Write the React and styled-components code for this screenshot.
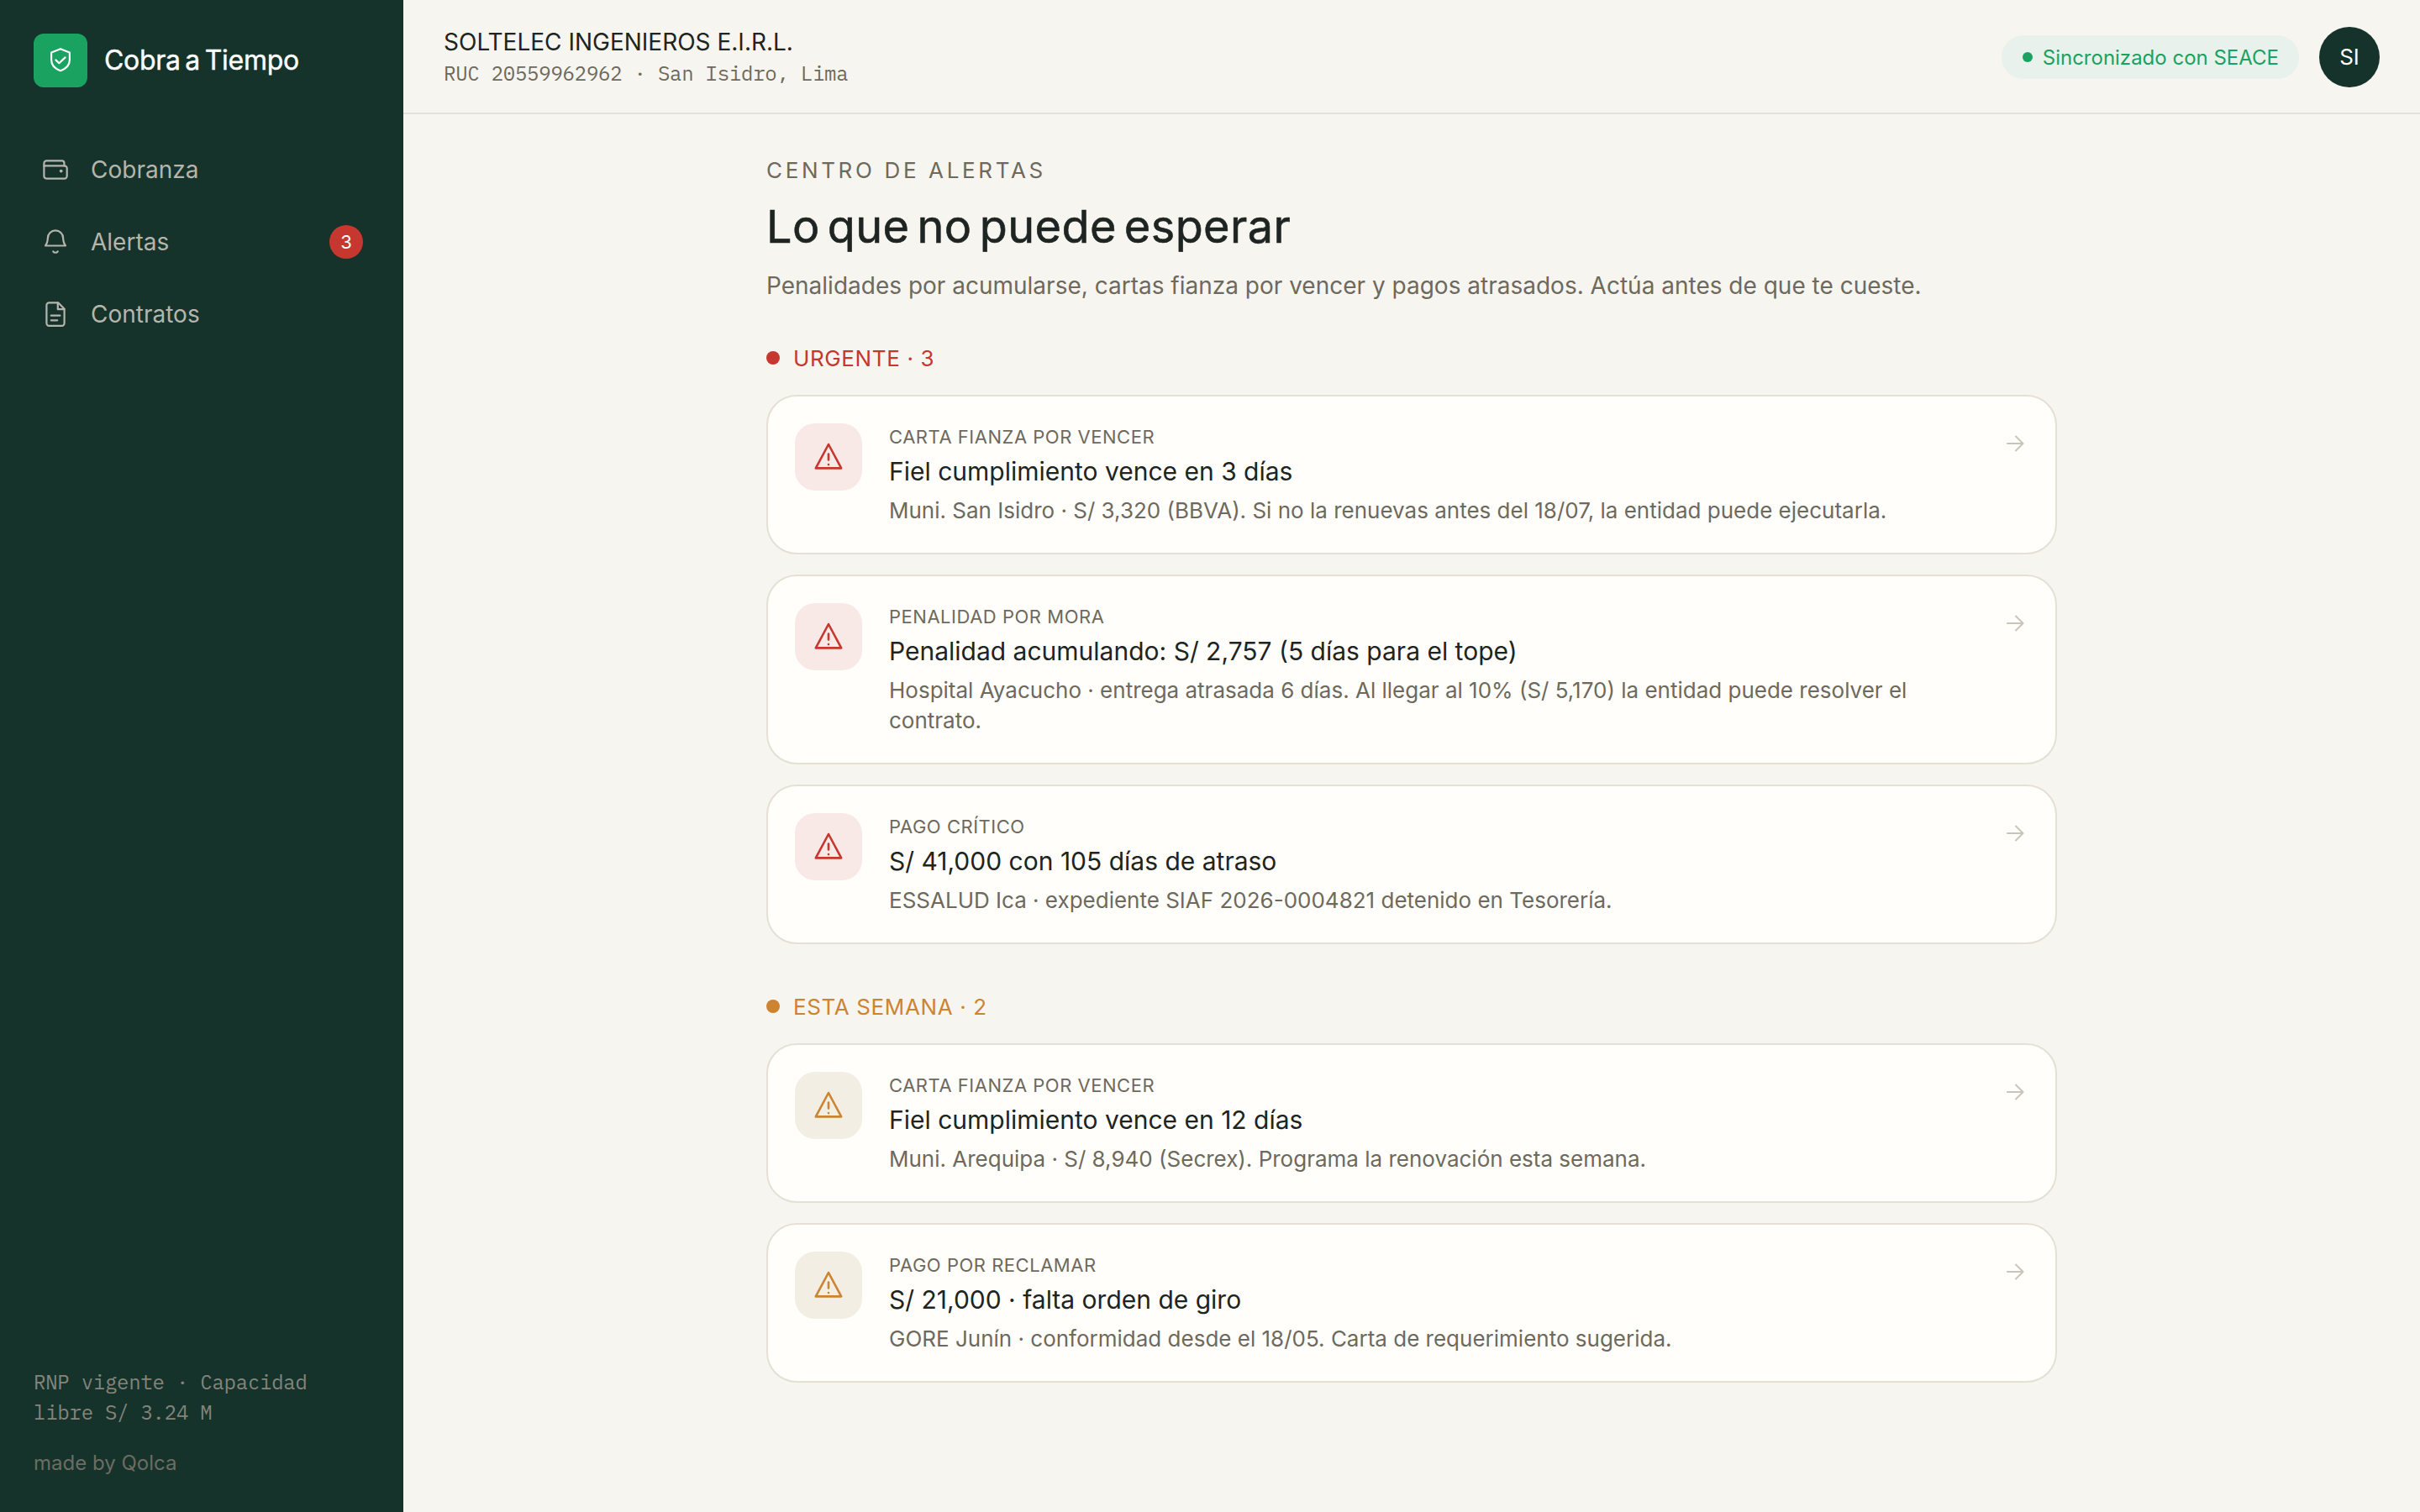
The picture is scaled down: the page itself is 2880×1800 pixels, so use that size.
import styled, { createGlobalStyle } from "styled-components";

const GlobalStyle = createGlobalStyle`
  * {
    box-sizing: border-box;
  }

  body {
    margin: 0;
    background: #f7f5f0;
    color: #1d2421;
    font-family: Inter, "Liberation Sans", sans-serif;
    font-size: 28px;
  }

  h1, h2, h3, p {
    margin: 0;
    font-weight: 400;
  }
`;

const tones = {
  urgent: { color: "#c5372f", background: "#f8e8e6" },
  week: { color: "#cd8431", background: "#f2eee3" },
};

const Layout = styled.div`
  display: flex;
  min-height: 100vh;
`;

const Sidebar = styled.aside`
  display: flex;
  flex-direction: column;
  flex: none;
  width: 480px;
  padding: 40px 24px;
  background: #15332b;
`;

const Brand = styled.div`
  display: flex;
  align-items: center;
  gap: 20px;
  padding: 0 16px;
`;

const BrandMark = styled.div`
  display: flex;
  align-items: center;
  justify-content: center;
  width: 64px;
  height: 64px;
  border-radius: 12px;
  background: #1aa260;
  color: #fff;
`;

const BrandName = styled.span`
  padding-bottom: 2px;
  color: #fff;
  font-size: 32px;
  letter-spacing: -0.3px;
  word-spacing: -3px;
  white-space: nowrap;
  -webkit-text-stroke: 0.4px currentColor;
`;

const Nav = styled.nav`
  display: flex;
  flex-direction: column;
  gap: 8px;
  margin-top: 59px;
`;

const NavItem = styled.a`
  display: flex;
  align-items: center;
  gap: 24px;
  height: 78px;
  padding: 0 24px;
  color: #b5b5ad;
`;

const Badge = styled.span`
  margin-left: auto;
  width: 40px;
  border-radius: 50%;
  background: #c5372f;
  color: #fff;
  font-size: 22px;
  line-height: 40px;
  text-align: center;
`;

const SidebarFooter = styled.div`
  margin-top: auto;
  padding: 0 16px;
`;

const Mono = styled.p`
  color: ${(props) => props.$color};
  font-family: "IBM Plex Mono", "Liberation Mono", monospace;
  font-size: 24px;
  letter-spacing: -0.24px;
  line-height: 36px;
`;

const MadeBy = styled.p`
  margin-top: 25px;
  color: #6d6c63;
  font-size: 24px;
  line-height: 36px;
`;

const Page = styled.div`
  flex: 1;
`;

const TopBar = styled.header`
  display: flex;
  align-items: center;
  justify-content: space-between;
  height: 136px;
  padding: 0 48px;
  box-shadow: inset 0 -2px #e6e1d6;
`;

const Company = styled.div`
  padding-bottom: 4px;
`;

const CompanyName = styled.p`
  padding-top: 4px;
  line-height: 38px;
`;

const TopBarSide = styled.div`
  display: flex;
  align-items: center;
  gap: 24px;
`;

const SyncPill = styled.div`
  display: flex;
  align-items: center;
  gap: 12px;
  height: 52px;
  padding: 0 24px 0 25px;
  border-radius: 26px;
  background: #e8f1eb;
  color: #1aa260;
  font-size: 24px;
`;

const Dot = styled.span`
  width: ${(props) => props.$size}px;
  height: ${(props) => props.$size}px;
  border-radius: 50%;
  background: currentColor;
`;

const Avatar = styled.div`
  width: 72px;
  border-radius: 50%;
  background: #15332b;
  color: #fff;
  font-size: 26px;
  line-height: 72px;
  text-align: center;
`;

const Content = styled.main`
  width: 1536px;
  margin: 0 auto;
  padding-top: 47px;
`;

const Eyebrow = styled.p`
  color: #6e695d;
  font-size: 26px;
  letter-spacing: 3.65px;
  line-height: 40px;
`;

const Title = styled.h1`
  margin-top: 11px;
  font-size: 54px;
  letter-spacing: 0.4px;
  word-spacing: -6.5px;
  line-height: 72px;
  -webkit-text-stroke: 0.6px currentColor;
`;

const Lead = styled.p`
  margin: 12px 0 44px;
  color: #6e695d;
  line-height: 44px;
`;

const Section = styled.section`
  margin-bottom: 54px;
`;

const SectionLabel = styled.h2`
  display: flex;
  align-items: center;
  gap: 16px;
  color: ${(props) => tones[props.$tone].color};
  font-size: 26px;
  letter-spacing: 0.62px;
  line-height: 40px;

  span:last-child {
    padding-top: 2px;
    line-height: 38px;
  }
`;

const CardList = styled.div`
  display: flex;
  flex-direction: column;
  gap: 24px;
  margin-top: 24px;
`;

const Card = styled.article`
  display: flex;
  align-items: flex-start;
  gap: 32px;
  padding: 32px;
  border: 2px solid #e5e0d3;
  border-radius: 36px;
  background: #fffefa;
`;

const CardIcon = styled.div`
  display: flex;
  align-items: center;
  justify-content: center;
  flex: none;
  width: 80px;
  height: 80px;
  border-radius: 24px;
  background: ${(props) => tones[props.$tone].background};
  color: ${(props) => tones[props.$tone].color};
`;

const CardBody = styled.div`
  flex: 1;
`;

const CardKind = styled.p`
  color: #6e695d;
  font-size: 22px;
  letter-spacing: 0.52px;
  line-height: 32px;
`;

const CardTitle = styled.h3`
  margin-top: 4px;
  font-size: 30px;
  line-height: 42px;
`;

const CardText = styled.p`
  max-width: 1240px;
  margin-top: 8px;
  color: #6e695d;
  font-size: 26px;
  line-height: 36px;
`;

const CardArrow = styled.div`
  display: flex;
  margin-top: 8px;
  color: #c9c3b8;
`;

const Icon = ({ size = 36, stroke = 2.2, children }) => (
  <svg
    width={size}
    height={size}
    viewBox={`0 0 ${size} ${size}`}
    fill="none"
    stroke="currentColor"
    strokeWidth={stroke}
    strokeLinecap="round"
    strokeLinejoin="round"
  >
    {children}
  </svg>
);

const ShieldIcon = () => (
  <Icon stroke={2.2}>
    <path d="M18 4.2 28.9 8.6v8.6c0 5.7-3.6 10.3-10.9 13-7.3-2.7-10.9-7.3-10.9-13V8.6Z" />
    <path d="m12.4 17.4 3.9 3.8 7.3-6.8" />
  </Icon>
);

const WalletIcon = () => (
  <Icon>
    <path d="M4.4 13.4V10.4a3 3 0 0 1 3-3h18.4a2.6 2.6 0 0 1 2.6 2.6v3.4" />
    <path d="M4.4 13.4h24.3a3 3 0 0 1 3 3v9.2a3 3 0 0 1-3 3H7.4a3 3 0 0 1-3-3Z" />
    <circle cx="24.7" cy="19.6" r="1.9" fill="currentColor" stroke="none" />
  </Icon>
);

const BellIcon = () => (
  <Icon>
    <path d="M6 22.5c2-2.4 2.7-5.4 2.9-9.1a9.1 9.1 0 0 1 18.2 0c.2 3.7.9 6.7 2.9 9.1Z" />
    <path d="M15.3 29.3c1.2 1.9 4.2 1.9 5.4 0" />
  </Icon>
);

const FileIcon = () => (
  <Icon>
    <path d="M21.2 4.3H10.4a3 3 0 0 0-3 3v21.5a3 3 0 0 0 3 3h15.2a3 3 0 0 0 3-3V11.7Z" />
    <path d="M20.8 4.6v7.6h7.6" />
    <path d="M12.8 19.7h10.6M12.8 25.3h7.4" />
  </Icon>
);

const WarningIcon = () => (
  <Icon size={40} stroke={2.6}>
    <path d="M20 5 35.2 33.4H4.8Z" />
    <path d="M20 16.6v6.8M20 29v.1" />
  </Icon>
);

const ArrowIcon = () => (
  <Icon size={32} stroke={1.9}>
    <path d="M7 16h18.6M17 7.5l8.6 8.5-8.6 8.5" />
  </Icon>
);

const navItems = [
  { label: "Cobranza", icon: WalletIcon },
  { label: "Alertas", icon: BellIcon, count: 3 },
  { label: "Contratos", icon: FileIcon },
];

const groups = [
  {
    tone: "urgent",
    label: "URGENTE",
    alerts: [
      {
        kind: "CARTA FIANZA POR VENCER",
        title: "Fiel cumplimiento vence en 3 días",
        text: "Muni. San Isidro · S/ 3,320 (BBVA). Si no la renuevas antes del 18/07, la entidad puede ejecutarla.",
      },
      {
        kind: "PENALIDAD POR MORA",
        title: "Penalidad acumulando: S/ 2,757 (5 días para el tope)",
        text: "Hospital Ayacucho · entrega atrasada 6 días. Al llegar al 10% (S/ 5,170) la entidad puede resolver el contrato.",
      },
      {
        kind: "PAGO CRÍTICO",
        title: "S/ 41,000 con 105 días de atraso",
        text: "ESSALUD Ica · expediente SIAF 2026-0004821 detenido en Tesorería.",
      },
    ],
  },
  {
    tone: "week",
    label: "ESTA SEMANA",
    alerts: [
      {
        kind: "CARTA FIANZA POR VENCER",
        title: "Fiel cumplimiento vence en 12 días",
        text: "Muni. Arequipa · S/ 8,940 (Secrex). Programa la renovación esta semana.",
      },
      {
        kind: "PAGO POR RECLAMAR",
        title: "S/ 21,000 · falta orden de giro",
        text: "GORE Junín · conformidad desde el 18/05. Carta de requerimiento sugerida.",
      },
    ],
  },
];

function App() {
  return (
    <Layout>
      <GlobalStyle />
      <Sidebar>
        <Brand>
          <BrandMark>
            <ShieldIcon />
          </BrandMark>
          <BrandName>Cobra a Tiempo</BrandName>
        </Brand>
        <Nav>
          {navItems.map(({ label, icon: NavIcon, count }) => (
            <NavItem key={label}>
              <NavIcon />
              <span>{label}</span>
              {count && <Badge>{count}</Badge>}
            </NavItem>
          ))}
        </Nav>
        <SidebarFooter>
          <Mono $color="#84847b">RNP vigente · Capacidad libre S/ 3.24 M</Mono>
          <MadeBy>made by Qolca</MadeBy>
        </SidebarFooter>
      </Sidebar>
      <Page>
        <TopBar>
          <Company>
            <CompanyName>SOLTELEC INGENIEROS E.I.R.L.</CompanyName>
            <Mono $color="#6e695d">RUC 20559962962 · San Isidro, Lima</Mono>
          </Company>
          <TopBarSide>
            <SyncPill>
              <Dot $size={12} />
              <span>Sincronizado con SEACE</span>
            </SyncPill>
            <Avatar>SI</Avatar>
          </TopBarSide>
        </TopBar>
        <Content>
          <Eyebrow>CENTRO DE ALERTAS</Eyebrow>
          <Title>Lo que no puede esperar</Title>
          <Lead>
            Penalidades por acumularse, cartas fianza por vencer y pagos
            atrasados. Actúa antes de que te cueste.
          </Lead>
          {groups.map(({ tone, label, alerts }) => (
            <Section key={label}>
              <SectionLabel $tone={tone}>
                <Dot $size={16} />
                <span>
                  {label} · {alerts.length}
                </span>
              </SectionLabel>
              <CardList>
                {alerts.map((alert) => (
                  <Card key={alert.title}>
                    <CardIcon $tone={tone}>
                      <WarningIcon />
                    </CardIcon>
                    <CardBody>
                      <CardKind>{alert.kind}</CardKind>
                      <CardTitle>{alert.title}</CardTitle>
                      <CardText>{alert.text}</CardText>
                    </CardBody>
                    <CardArrow>
                      <ArrowIcon />
                    </CardArrow>
                  </Card>
                ))}
              </CardList>
            </Section>
          ))}
        </Content>
      </Page>
    </Layout>
  );
}

export default App;
